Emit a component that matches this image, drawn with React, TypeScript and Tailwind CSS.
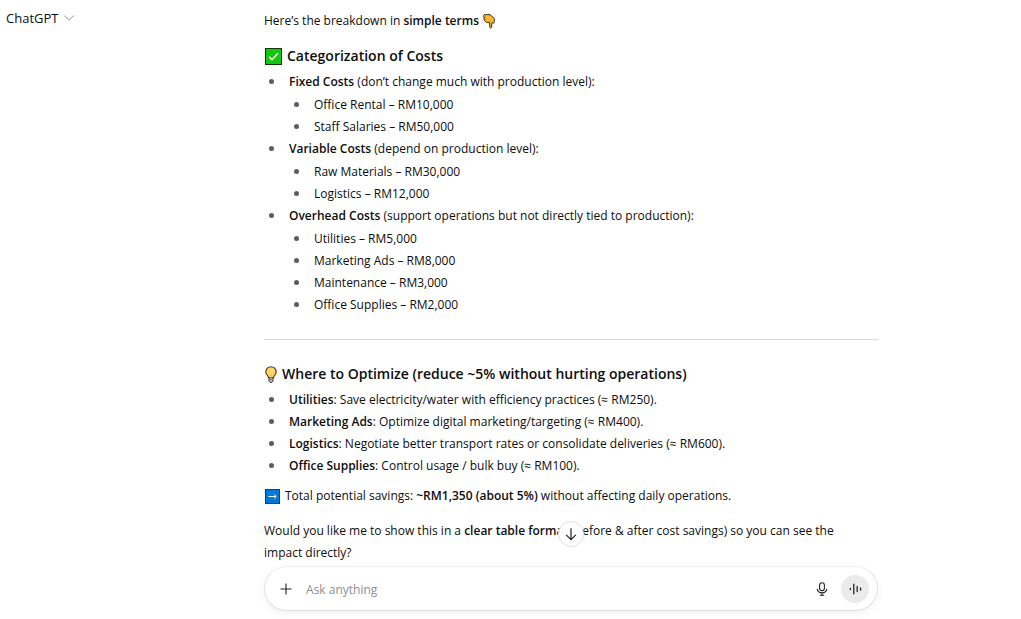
import React from 'react';
import { ChevronDown } from 'lucide-react';

interface ItemProps {
  children: React.ReactNode;
  sub?: string[];
}

interface CostGroup {
  name: string;
  note: string;
  items: string[];
}

const costs: CostGroup[] = [
  {
    name: 'Fixed Costs',
    note: '(don’t change much with production level):',
    items: ['Office Rental – RM10,000', 'Staff Salaries – RM50,000'],
  },
  {
    name: 'Variable Costs',
    note: '(depend on production level):',
    items: ['Raw Materials – RM30,000', 'Logistics – RM12,000'],
  },
  {
    name: 'Overhead Costs',
    note: '(support operations but not directly tied to production):',
    items: [
      'Utilities – RM5,000',
      'Marketing Ads – RM8,000',
      'Maintenance – RM3,000',
      'Office Supplies – RM2,000',
    ],
  },
];

const savings = [
  { name: 'Utilities', text: 'Save electricity/water with efficiency practices (≈ RM250).' },
  { name: 'Marketing Ads', text: 'Optimize digital marketing/targeting (≈ RM400).' },
  { name: 'Logistics', text: 'Negotiate better transport rates or consolidate deliveries (≈ RM600).' },
  { name: 'Office Supplies', text: 'Control usage / bulk buy (≈ RM100).' },
];

const PointDown = () => (
  <svg viewBox="0 0 12 15" className="w-3 h-[15px] flex-shrink-0" aria-hidden="true">
    <path
      d="M.7 1.2 1.3.6H7l4.3 3.8v3.3l-.6 1.5-1.5-.3-.5 1v3.4l-.9 1-1.1-1V8.8L3.4 8.3 1.2 6.2z"
      fill="#fdb92e"
      stroke="#3b3226"
      strokeLinejoin="round"
    />
    <path d="M1.2 3.2h1.6M1.8 5.2h1.6M6.9 8.6V7" stroke="#9a6a18" strokeWidth=".7" fill="none" />
  </svg>
);

const CheckBox = () => (
  <svg viewBox="0 0 17 17" className="size-[17px] flex-shrink-0" aria-hidden="true">
    <rect x=".5" y=".5" width="16" height="16" fill="#16c60c" stroke="#12380f" />
    <path d="m4 8.8 3 3 6-6.6" fill="none" stroke="#fff" strokeWidth="1.4" />
  </svg>
);

const Bulb = () => (
  <svg viewBox="0 0 12 17" className="w-3 h-[17px] flex-shrink-0" aria-hidden="true">
    <path d="M4 11h4v4.2l-1 1.1H5l-1-1.1z" fill="#c9c9c9" stroke="#3a3a3a" />
    <path
      d="M6 .7A5.2 5.2 0 0 0 .8 5.9c0 2.4 2.1 3.3 2.7 5.8h5c.6-2.5 2.7-3.4 2.7-5.8A5.2 5.2 0 0 0 6 .7z"
      fill="#ffd367"
      stroke="#3d3526"
      strokeWidth="1.1"
    />
    <path d="M5.2 11.2V9.2h1.6v2" fill="#fff0c0" stroke="#f0ae2c" strokeWidth=".6" />
    <path d="M4 13.6h4" stroke="#6a6a6a" strokeWidth=".8" />
  </svg>
);

const ArrowBox = () => (
  <svg viewBox="0 0 15 15" className="size-[15px] flex-shrink-0" aria-hidden="true">
    <rect x=".5" y=".5" width="14" height="14" fill="#0078d7" stroke="#1d3f5e" />
    <path d="M3.5 7.5h7.6M9.2 5.6l2 1.9-2 1.9" fill="none" stroke="#fff" />
  </svg>
);

const Item: React.FC<ItemProps> = ({ children, sub }) => (
  <li className="flex">
    <span className="size-[5px] mt-2 ml-[5px] mr-[15px] rounded-full bg-[#5d5d5d] flex-shrink-0" />
    <div className="flex-1 min-w-0">
      {children}
      {sub && (
        <ul className="pt-px">
          {sub.map((s) => (
            <Item key={s}>{s}</Item>
          ))}
        </ul>
      )}
    </div>
  </li>
);

const Composer = () => (
  <form
    className="relative mt-0.5 h-[45px] flex items-center rounded-full bg-white border border-[#e2e2e2] border-t-[#f0f0f0] pl-[11px] pr-2 shadow-[0_3px_8px_rgba(0,0,0,0.05)]"
    onSubmit={(e) => e.preventDefault()}
  >
    <button
      type="button"
      aria-label="Scroll to bottom"
      className="absolute -top-[46px] left-1/2 -translate-x-1/2 size-[26px] rounded-full bg-white border border-[#e0e0e0] flex items-center justify-center"
    >
      <svg viewBox="0 0 14 14" className="size-[14px]" aria-hidden="true">
        <path d="M7 1.2v11.2M2.2 7.8 7 12.6l4.8-4.8" fill="none" stroke="#222" strokeWidth="1.2" />
      </svg>
    </button>
    <button type="button" aria-label="Add files" className="size-5 flex items-center justify-center">
      <svg viewBox="0 0 12 12" className="size-3" aria-hidden="true">
        <path d="M6 .5v11M.5 6h11" stroke="#222" strokeWidth="1.1" />
      </svg>
    </button>
    <input
      type="text"
      aria-label="Ask anything"
      placeholder="Ask anything"
      className="flex-1 min-w-0 ml-[10px] pt-0.5 bg-transparent outline-none placeholder:text-[#8f8f8f]"
    />
    <button type="button" aria-label="Dictate" className="size-7 mr-[5px] flex items-center justify-center">
      <svg viewBox="0 0 12 14" className="w-3 h-[14px]" fill="none" stroke="#222" strokeWidth="1.1" aria-hidden="true">
        <rect x="3.6" y=".8" width="4.8" height="7.8" rx="2.4" />
        <path d="M1.2 6.8C1.6 9.4 3.6 10.8 6 10.8s4.4-1.4 4.8-4M6 10.8v2.4M3.8 13.2h4.4" />
      </svg>
    </button>
    <button
      type="button"
      aria-label="Use voice mode"
      className="size-7 rounded-full bg-[#ebebeb] flex items-center justify-center"
    >
      <svg viewBox="0 0 13 12" className="w-[13px] h-3" stroke="#222" strokeWidth="1.3" strokeLinecap="round" aria-hidden="true">
        <path d="M1.4 5.4v1.2M4.8 1.2v9.6M8.2 3.4v5.2M11.6 5v2" />
      </svg>
    </button>
  </form>
);

const App: React.FC = () => (
  <div className="min-h-screen flex bg-white text-[#0d0d0d] text-[12px] leading-[22px] font-['Open_Sans','Noto_Sans',sans-serif]">
    <header className="w-[121px] flex-shrink-0 pt-[7px] pl-[6px]">
      <button type="button" className="flex items-center gap-0.5 text-[13px] leading-[22px]">
        ChatGPT
        <ChevronDown size={18} strokeWidth={1.3} className="text-[#8f8f8f]" />
      </button>
    </header>

    <main className="flex-1 min-w-0">
      <div className="max-w-[614px] mx-auto pt-[10px]">
        <p className="flex items-center gap-1">
          <span>
            Here’s the breakdown in <strong className="font-semibold">simple terms</strong>
          </span>
          <PointDown />
        </p>

        <h3 className="mt-[13px] pl-px flex items-center gap-[5px] text-sm leading-[22px] font-semibold">
          <CheckBox />
          Categorization of Costs
        </h3>
        <ul className="mt-1">
          {costs.map((c) => (
            <Item key={c.name} sub={c.items}>
              <strong className="font-semibold">{c.name}</strong> {c.note}
            </Item>
          ))}
        </ul>

        <hr className="my-[23px] border-[#d9d9d9]" />

        <h3 className="pl-px flex items-center gap-[5px] text-sm leading-[22px] font-semibold">
          <Bulb />
          Where to Optimize (reduce ~5% without hurting operations)
        </h3>
        <ul className="mt-1">
          {savings.map((s) => (
            <Item key={s.name}>
              <strong className="font-semibold">{s.name}</strong>: {s.text}
            </Item>
          ))}
        </ul>

        <p className="mt-2 pl-px flex items-center gap-[5px]">
          <ArrowBox />
          <span>
            Total potential savings: <strong className="font-semibold">~RM1,350 (about 5%)</strong> without affecting
            daily operations.
          </span>
        </p>
        <p className="mt-[13px] pr-6">
          Would you like me to show this in a <strong className="font-semibold">clear table format</strong> (before
          &amp; after cost savings) so you can see the impact directly?
        </p>

        <Composer />
      </div>
    </main>
  </div>
);

export default App;
